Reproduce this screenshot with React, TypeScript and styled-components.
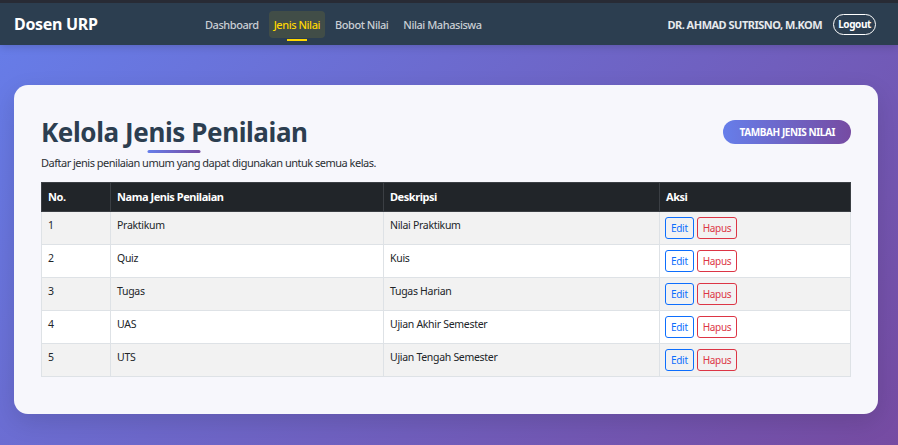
import styled, { createGlobalStyle } from 'styled-components';

const GlobalStyle = createGlobalStyle`
  html, body {
    margin: 0;
    padding: 0;
  }
  body {
    min-height: 445px;
    font-family: 'Noto Sans', 'Open Sans', 'DejaVu Sans', sans-serif;
    background: linear-gradient(135deg, #667eea 0%, #764ba2 100%);
    background-attachment: fixed;
  }
`;

const Page = styled.div`
  min-height: 445px;
  display: flex;
  flex-direction: column;
`;

const Navbar = styled.nav`
  height: 42px;
  border-top: 3px solid #282b35;
  background: #2c3e50;
  display: flex;
  align-items: center;
  padding: 0 22px 0 14px;
  box-shadow: 0 2px 8px rgba(0, 0, 0, 0.15);
`;

const Brand = styled.div`
  width: 186px;
  font-size: 16px;
  font-weight: 700;
  letter-spacing: -0.3px;
  color: #ffffff;
`;

const NavLinks = styled.ul`
  display: flex;
  gap: 5px;
  margin: 0;
  padding: 0;
  list-style: none;
  flex: 1;
`;

const NavLink = styled.li<{ $active?: boolean }>`
  position: relative;
  padding: 5px;
  border-radius: 4px;
  font-size: 11px;
  line-height: 17px;
  font-weight: 500;
  letter-spacing: -0.45px;
  color: ${({ $active }) => ($active ? '#ffd700' : '#c9ced4')};
  background: ${({ $active }) => ($active ? 'rgba(255, 215, 0, 0.1)' : 'transparent')};
  &::after {
    content: '';
    display: ${({ $active }) => ($active ? 'block' : 'none')};
    position: absolute;
    left: 50%;
    bottom: -3px;
    width: 20px;
    height: 2px;
    transform: translateX(-50%);
    background: #ffd700;
  }
`;

const UserBox = styled.div`
  display: flex;
  align-items: center;
  gap: 11px;
`;

const UserName = styled.span`
  font-size: 11px;
  font-weight: 700;
  letter-spacing: -0.5px;
  color: #e6e9ec;
`;

const LogoutButton = styled.button`
  height: 21px;
  padding: 0 4px;
  border: 1.5px solid #ffffff;
  border-radius: 11px;
  background: transparent;
  color: #ffffff;
  font-family: inherit;
  font-size: 10px;
  font-weight: 700;
  letter-spacing: -0.4px;
`;

const Card = styled.main`
  margin: 40px 20px 32px 14px;
  padding: 27px 27px 37px;
  background: #f7f7fc;
  border-radius: 14px;
  box-shadow: 0 8px 24px rgba(0, 0, 0, 0.12);
`;

const Header = styled.div`
  display: flex;
  align-items: center;
  justify-content: space-between;
`;

const Title = styled.h2`
  position: relative;
  margin: 0;
  font-size: 26px;
  line-height: 40px;
  font-weight: 700;
  letter-spacing: -0.4px;
  color: #2c3e50;
  &::after {
    content: '';
    position: absolute;
    left: 50%;
    bottom: -1px;
    width: 53px;
    height: 3px;
    border-radius: 2px;
    transform: translateX(-50%);
    background: linear-gradient(90deg, #667eea, #764ba2);
  }
`;

const AddButton = styled.button`
  height: 24px;
  padding: 0 16px;
  border: none;
  border-radius: 12px;
  background: linear-gradient(90deg, #667eea, #764ba2);
  color: #ffffff;
  font-family: inherit;
  font-size: 10px;
  font-weight: 700;
  letter-spacing: -0.4px;
`;

const Subtitle = styled.p`
  margin: 3px 0 11px;
  font-size: 11px;
  line-height: 16px;
  letter-spacing: -0.5px;
  color: #2b2f33;
`;

const Table = styled.table`
  width: 100%;
  table-layout: fixed;
  border-collapse: collapse;
  font-size: 10.5px;
  line-height: 16px;
  letter-spacing: -0.3px;
  color: #212529;
`;

const Col = styled.col<{ $width?: number }>`
  width: ${({ $width }) => ($width ? `${$width}px` : 'auto')};
`;

const HeadCell = styled.th`
  padding: 6px;
  background: #212529;
  border: 1px solid #3b3f44;
  color: #ffffff;
  font-size: 11px;
  font-weight: 700;
  letter-spacing: -0.45px;
  text-align: left;
`;

const Row = styled.tr<{ $striped?: boolean }>`
  background: ${({ $striped }) => ($striped ? '#f2f2f2' : '#ffffff')};
`;

const Cell = styled.td`
  padding: 5px 6px;
  border: 1px solid #dee2e6;
  vertical-align: top;
`;

const ActionCell = styled(Cell)`
  padding: 5px 5px;
`;

const Actions = styled.div`
  display: flex;
  gap: 3px;
`;

const ActionButton = styled.button<{ $tone: 'blue' | 'red' }>`
  height: 22px;
  padding: 0 5px;
  border: 1px solid ${({ $tone }) => ($tone === 'blue' ? '#0d6efd' : '#dc3545')};
  border-radius: 3px;
  background: transparent;
  color: ${({ $tone }) => ($tone === 'blue' ? '#0d6efd' : '#dc3545')};
  font-family: inherit;
  font-size: 10px;
  letter-spacing: -0.3px;
`;

const rows = [
  { no: 1, nama: 'Praktikum', deskripsi: 'Nilai Praktikum' },
  { no: 2, nama: 'Quiz', deskripsi: 'Kuis' },
  { no: 3, nama: 'Tugas', deskripsi: 'Tugas Harian' },
  { no: 4, nama: 'UAS', deskripsi: 'Ujian Akhir Semester' },
  { no: 5, nama: 'UTS', deskripsi: 'Ujian Tengah Semester' },
];

const links = ['Dashboard', 'Jenis Nilai', 'Bobot Nilai', 'Nilai Mahasiswa'];

const App = () => {
  return (
    <Page>
      <GlobalStyle />
      <Navbar>
        <Brand>Dosen URP</Brand>
        <NavLinks>
          {links.map((link) => (
            <NavLink key={link} $active={link === 'Jenis Nilai'}>
              {link}
            </NavLink>
          ))}
        </NavLinks>
        <UserBox>
          <UserName>DR. AHMAD SUTRISNO, M.KOM</UserName>
          <LogoutButton>Logout</LogoutButton>
        </UserBox>
      </Navbar>
      <Card>
        <Header>
          <Title>Kelola Jenis Penilaian</Title>
          <AddButton>TAMBAH JENIS NILAI</AddButton>
        </Header>
        <Subtitle>Daftar jenis penilaian umum yang dapat digunakan untuk semua kelas.</Subtitle>
        <Table>
          <colgroup>
            <Col $width={69} />
            <Col $width={273} />
            <Col $width={276} />
            <Col />
          </colgroup>
          <thead>
            <tr>
              <HeadCell>No.</HeadCell>
              <HeadCell>Nama Jenis Penilaian</HeadCell>
              <HeadCell>Deskripsi</HeadCell>
              <HeadCell>Aksi</HeadCell>
            </tr>
          </thead>
          <tbody>
            {rows.map((row, i) => (
              <Row key={row.no} $striped={i % 2 === 0}>
                <Cell>{row.no}</Cell>
                <Cell>{row.nama}</Cell>
                <Cell>{row.deskripsi}</Cell>
                <ActionCell>
                  <Actions>
                    <ActionButton $tone="blue">Edit</ActionButton>
                    <ActionButton $tone="red">Hapus</ActionButton>
                  </Actions>
                </ActionCell>
              </Row>
            ))}
          </tbody>
        </Table>
      </Card>
    </Page>
  );
};

export default App;
